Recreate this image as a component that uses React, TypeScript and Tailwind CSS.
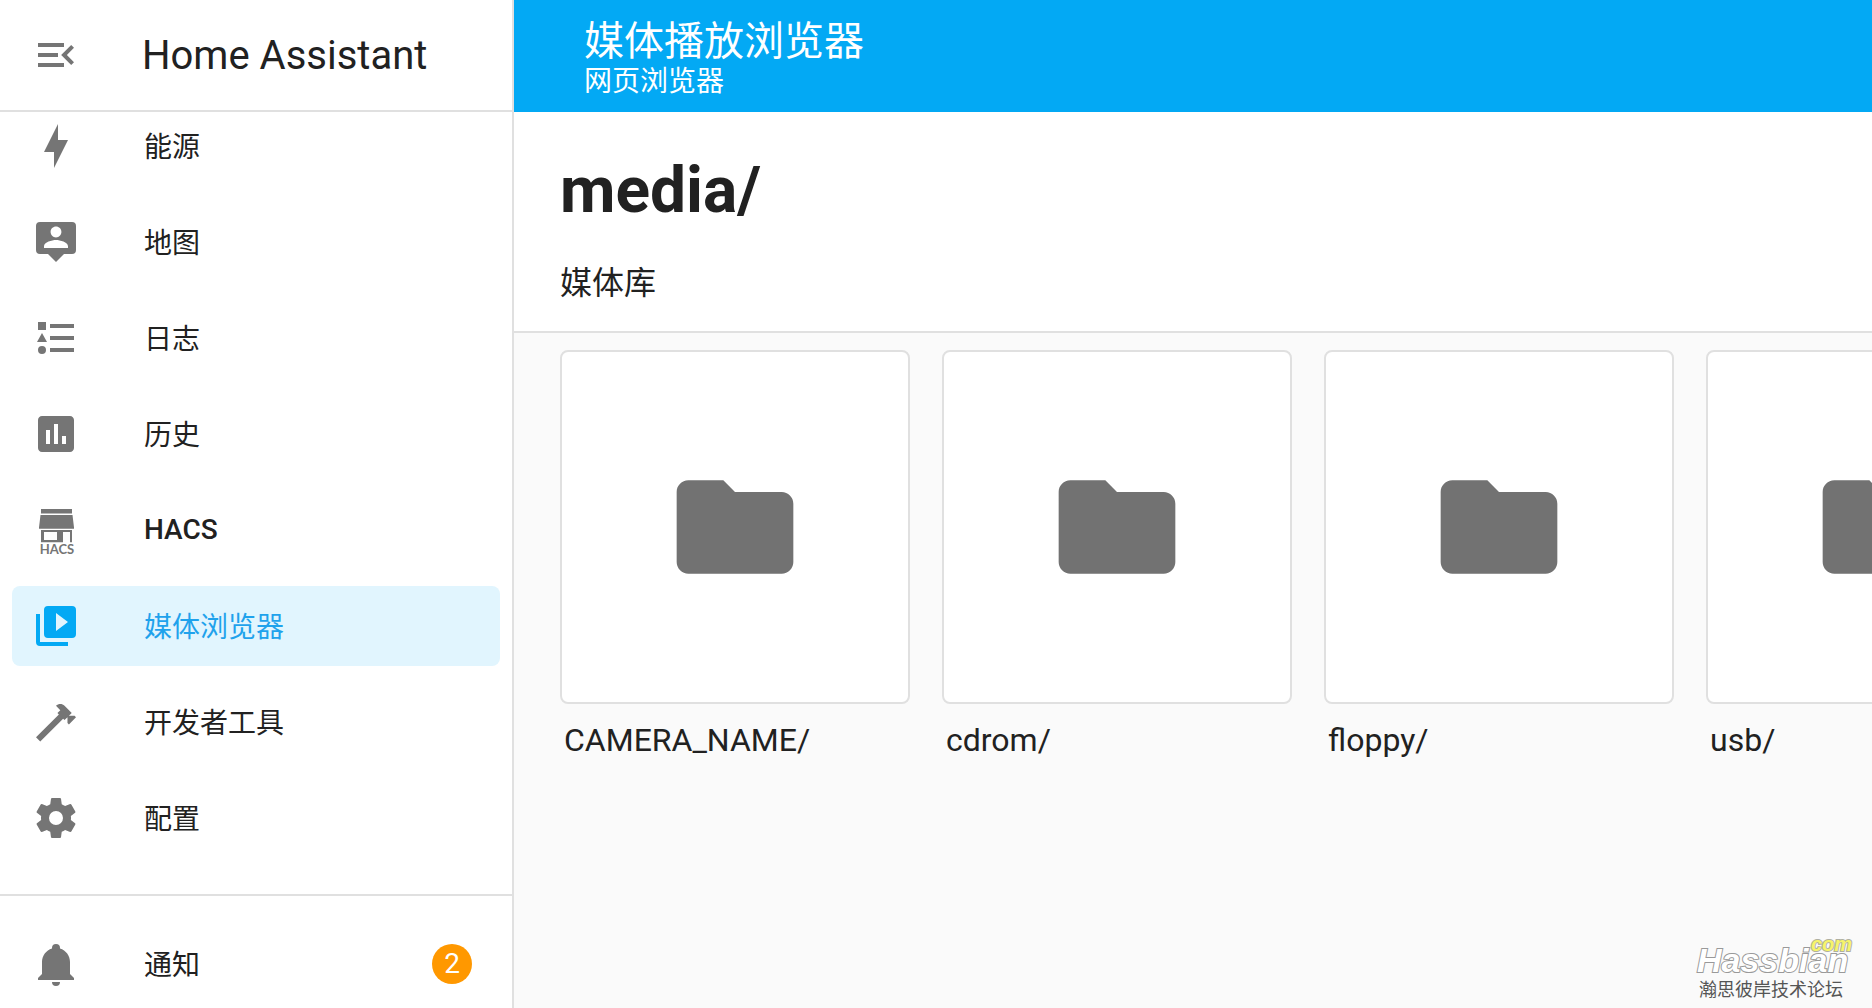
import { ReactNode, useState } from 'react';
import clsx from 'clsx';

const icons = {
  menuOpen:
    'M21,15.61L19.59,17L14.58,12L19.59,7L21,8.39L17.44,12L21,15.61M3,6H16V8H3V6M3,13V11H13V13H3M3,18V16H16V18H3Z',
  energy: 'M11 15H6L13 1V9H18L11 23V15Z',
  map: 'M20,2H4A2,2 0 0,0 2,4V16A2,2 0 0,0 4,18H8L12,22L16,18H20A2,2 0 0,0 22,16V4A2,2 0 0,0 20,2M12,4.3C13.5,4.3 14.7,5.5 14.7,7C14.7,8.5 13.5,9.7 12,9.7C10.5,9.7 9.3,8.5 9.3,7C9.3,5.5 10.5,4.3 12,4.3M18,15H6V14.1C6,12.1 10,11 12,11C14,11 18,12.1 18,14.1V15Z',
  logbook:
    'M5,9.5L7.5,14H2.5L5,9.5M3,4H7V8H3V4M5,20A2,2 0 0,0 7,18A2,2 0 0,0 5,16A2,2 0 0,0 3,18A2,2 0 0,0 5,20M9,5V7H21V5H9M9,19H21V17H9V19M9,13H21V11H9V13Z',
  history:
    'M9 17H7V10H9V17M13 17H11V7H13V17M17 17H15V13H17V17M19 3H5C3.89 3 3 3.89 3 5V19C3 20.11 3.89 21 5 21H19C20.11 21 21 20.11 21 19V5C21 3.89 20.11 3 19 3Z',
  media:
    'M4,6H2V20A2,2 0 0,0 4,22H18V20H4V6M20,2H8A2,2 0 0,0 6,4V16A2,2 0 0,0 8,18H20A2,2 0 0,0 22,16V4A2,2 0 0,0 20,2M12,14.5V5.5L18,10L12,14.5Z',
  tools:
    'M2,19.63L13.43,8.2L12.72,7.5L14.14,6.07L12,3.89C13.2,2.7 15.09,2.7 16.27,3.89L19.87,7.5L18.45,8.91H21.29L22,9.62L18.45,13.21L17.74,12.5V9.62L16.27,11.04L15.56,10.33L4.13,21.76L2,19.63Z',
  config:
    'M12,15.5A3.5,3.5 0 0,1 8.5,12A3.5,3.5 0 0,1 12,8.5A3.5,3.5 0 0,1 15.5,12A3.5,3.5 0 0,1 12,15.5M19.43,12.97C19.47,12.65 19.5,12.33 19.5,12C19.5,11.67 19.47,11.34 19.43,11L21.54,9.37C21.73,9.22 21.78,8.95 21.66,8.73L19.66,5.27C19.54,5.05 19.27,4.96 19.05,5.05L16.56,6.05C16.04,5.66 15.5,5.32 14.87,5.07L14.5,2.42C14.46,2.18 14.25,2 14,2H10C9.75,2 9.54,2.18 9.5,2.42L9.13,5.07C8.5,5.32 7.96,5.66 7.44,6.05L4.95,5.05C4.73,4.96 4.46,5.05 4.34,5.27L2.34,8.73C2.21,8.95 2.27,9.22 2.46,9.37L4.57,11C4.53,11.34 4.5,11.67 4.5,12C4.5,12.33 4.53,12.65 4.57,12.97L2.46,14.63C2.27,14.78 2.21,15.05 2.34,15.27L4.34,18.73C4.46,18.95 4.73,19.03 4.95,18.95L7.44,17.94C7.96,18.34 8.5,18.68 9.13,18.93L9.5,21.58C9.54,21.82 9.75,22 10,22H14C14.25,22 14.46,21.82 14.5,21.58L14.87,18.93C15.5,18.67 16.04,18.34 16.56,17.94L19.05,18.95C19.27,19.03 19.54,18.95 19.66,18.73L21.66,15.27C21.78,15.05 21.73,14.78 21.54,14.63L19.43,12.97Z',
  bell: 'M21,19V20H3V19L5,17V11C5,7.9 7.03,5.17 10,4.29C10,4.19 10,4.1 10,4A2,2 0 0,1 12,2A2,2 0 0,1 14,4C14,4.1 14,4.19 14,4.29C16.97,5.17 19,7.9 19,11V17L21,19M14,21A2,2 0 0,1 12,23A2,2 0 0,1 10,21',
  folder:
    'M10,4H4C2.89,4 2,4.89 2,6V18A2,2 0 0,0 4,20H20A2,2 0 0,0 22,18V8C22,6.89 21.1,6 20,6H12L10,4Z',
};

function Icon({ path, className = 'size-12' }: { path: string; className?: string }) {
  return (
    <svg viewBox="0 0 24 24" className={clsx('shrink-0 fill-current', className)} aria-hidden="true">
      <path d={path} />
    </svg>
  );
}

function HacsIcon() {
  return (
    <svg viewBox="0 0 48 48" className="size-12 shrink-0 overflow-visible fill-current" aria-hidden="true">
      <path d="M9 3h31v4.500H9zM8.500 9h32L42 21.500v1.200H7v-1.200z" />
      <path fillRule="evenodd" d="M9 24h31v12.300h-2V26h-7v10.300H9zM12 26v8h13v-8z" />
      <text x="25" y="48" textAnchor="middle" className="font-[Lato,sans-serif] text-[13px] font-bold">
        HACS
      </text>
    </svg>
  );
}

interface NavItem {
  id: string;
  label: string;
  icon: ReactNode;
  latin?: boolean;
}

const navItems: NavItem[] = [
  { id: 'energy', label: '能源', icon: <Icon path={icons.energy} /> },
  { id: 'map', label: '地图', icon: <Icon path={icons.map} /> },
  { id: 'logbook', label: '日志', icon: <Icon path={icons.logbook} /> },
  { id: 'history', label: '历史', icon: <Icon path={icons.history} /> },
  { id: 'hacs', label: 'HACS', icon: <HacsIcon />, latin: true },
  { id: 'media', label: '媒体浏览器', icon: <Icon path={icons.media} /> },
  { id: 'tools', label: '开发者工具', icon: <Icon path={icons.tools} /> },
  { id: 'config', label: '配置', icon: <Icon path={icons.config} /> },
];

const folders = ['CAMERA_NAME/', 'cdrom/', 'floppy/', 'usb/'];

function Sidebar() {
  const [active, setActive] = useState('media');

  return (
    <aside className="flex w-[514px] shrink-0 flex-col border-r-2 border-[#e0e0e0] bg-white">
      <div className="flex h-28 shrink-0 items-center gap-[62px] border-b-2 border-[#e0e0e0] px-8">
        <button type="button" aria-label="Toggle sidebar" className="text-[#757575]">
          <Icon path={icons.menuOpen} />
        </button>
        <span className="pt-0.5 text-[40px] leading-12">Home Assistant</span>
      </div>

      {/* Anchored to the bottom, like a list scrolled to its end */}
      <nav className="flex min-h-0 flex-1 flex-col justify-end gap-4 overflow-hidden px-3 pb-9">
        {navItems.map(item => (
          <a
            key={item.id}
            href={`#${item.id}`}
            onClick={() => setActive(item.id)}
            className={clsx(
              'flex h-20 shrink-0 items-center gap-16 rounded-lg px-5 text-[28px] leading-10',
              item.id === active ? 'bg-[#e1f5fe] text-[#03a9f4]' : 'text-[#757575]'
            )}
          >
            {item.icon}
            <span
              className={clsx(
                item.latin ? 'font-medium' : 'pt-1',
                item.id === active ? 'text-[#1fa2ec]' : 'text-[#212121]'
              )}
            >
              {item.label}
            </span>
          </a>
        ))}
      </nav>

      <div className="shrink-0 border-t-2 border-[#e0e0e0] px-3 pt-7 pb-1">
        <a href="#notifications" className="flex h-20 items-center gap-16 px-5 text-[28px] leading-10 text-[#757575]">
          <Icon path={icons.bell} />
          <span className="flex-1 pt-1 text-[#212121]">通知</span>
          <span className="mr-2 flex size-10 items-center justify-center rounded-full bg-[#ff9800] text-white">
            2
          </span>
        </a>
      </div>
    </aside>
  );
}

function FolderCard({ name }: { name: string }) {
  return (
    <button type="button" className="w-[350px] shrink-0 text-left">
      <span className="flex h-[354px] items-center justify-center rounded-lg border-2 border-[#e0e0e0] bg-white text-[#727272]">
        <Icon path={icons.folder} className="size-[140px]" />
      </span>
      <span className="block px-1 pt-4 text-[32px] leading-10">{name}</span>
    </button>
  );
}

function Watermark() {
  return (
    <div className="absolute right-5 bottom-1.5 flex w-[155px] flex-col font-['Liberation_Sans','Noto_Sans_CJK_SC',sans-serif]">
      <div className="z-10 -mb-2 text-right text-[20px] leading-3 font-bold text-[#f6f46a] italic [-webkit-text-stroke:2px_#b0b0a0] [paint-order:stroke_fill]">
        com
      </div>
      <div className="text-[34px] leading-9 font-bold text-white italic [-webkit-text-stroke:2px_#999] [paint-order:stroke_fill]">
        Hassbian
      </div>
      <div className="pl-0.5 text-[18px] leading-6 text-[#555]">瀚思彼岸技术论坛</div>
    </div>
  );
}

export default function App() {
  return (
    <div className="relative flex h-screen overflow-hidden bg-[#fafafa] font-[Roboto,'Noto_Sans_CJK_SC',sans-serif] text-[#212121]">
      <Sidebar />

      <main className="flex min-w-0 flex-1 flex-col">
        <header className="flex h-28 shrink-0 flex-col justify-center bg-[#03a9f4] px-[70px] pt-1 text-white">
          <div className="text-[40px] leading-12">媒体播放浏览器</div>
          <div className="text-[28px] leading-8">网页浏览器</div>
        </header>

        <section className="shrink-0 border-b-2 border-[#e0e0e0] bg-white px-[46px] pt-[41px] pb-6">
          <h1 className="text-[64px] leading-19 font-bold">media/</h1>
          <h2 className="pt-[30px] text-[32px] leading-12">媒体库</h2>
        </section>

        <section className="flex flex-1 items-start gap-8 overflow-hidden px-[46px] pt-[17px]">
          {folders.map(name => (
            <FolderCard key={name} name={name} />
          ))}
        </section>
      </main>

      <Watermark />
    </div>
  );
}
